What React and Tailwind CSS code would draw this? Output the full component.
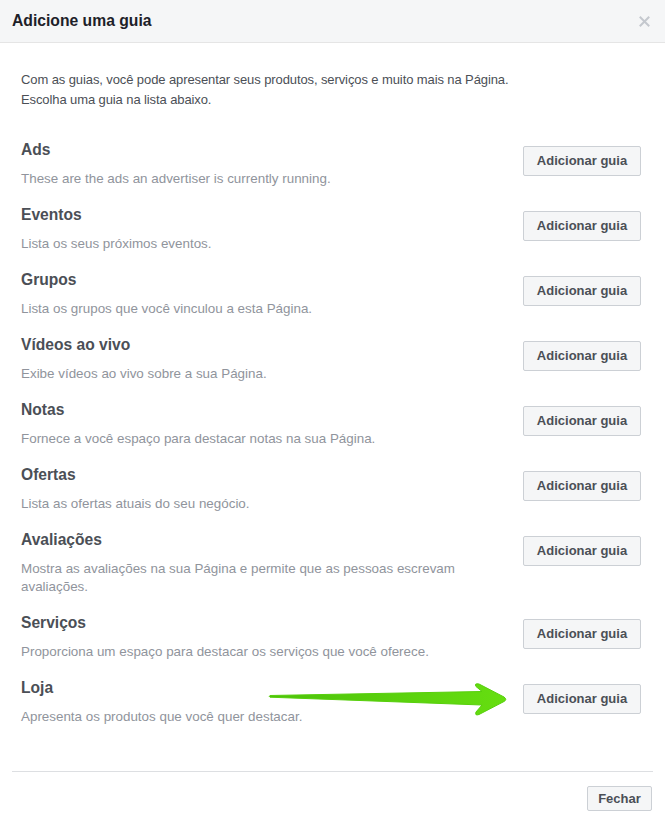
import React from 'react';

const tabs = [
    { name: 'Ads', description: 'These are the ads an advertiser is currently running.' },
    { name: 'Eventos', description: 'Lista os seus próximos eventos.' },
    { name: 'Grupos', description: 'Lista os grupos que você vinculou a esta Página.' },
    { name: 'Vídeos ao vivo', description: 'Exibe vídeos ao vivo sobre a sua Página.' },
    { name: 'Notas', description: 'Fornece a você espaço para destacar notas na sua Página.' },
    { name: 'Ofertas', description: 'Lista as ofertas atuais do seu negócio.' },
    { name: 'Avaliações', description: 'Mostra as avaliações na sua Página e permite que as pessoas escrevam avaliações.' },
    { name: 'Serviços', description: 'Proporciona um espaço para destacar os serviços que você oferece.' },
    { name: 'Loja', description: 'Apresenta os produtos que você quer destacar.' },
];

const GreenArrow = () => (
    <svg
        className="absolute left-[265px] top-[680px] pointer-events-none"
        width="250"
        height="40"
        viewBox="0 0 250 40"
    >
        <defs>
            <linearGradient id="arrowFill" x1="0" y1="0" x2="1" y2="0">
                <stop offset="0" stopColor="#4cc20a" />
                <stop offset="1" stopColor="#66de10" />
            </linearGradient>
        </defs>
        <path
            d="M5 15.5 L217 11.5 L211 6.5 Q209 3 214 4 L239 17 Q242.5 19.5 239 21.5 L214 34.5 Q209.5 36 211 32 L217 25 L5 17.2 Q3.5 16.3 5 15.5 Z"
            fill="url(#arrowFill)"
            stroke="#57cf0c"
            strokeWidth="1"
            strokeLinejoin="round"
        />
    </svg>
);

const App = () => {
    return (
        <div className="relative w-[665px] h-[825px] bg-white font-['Liberation_Sans',Arial,sans-serif]">
            <div className="h-[43px] bg-[#f5f6f7] border-b border-[#e5e5e5] flex items-center justify-between pl-[12px] pr-[15px]">
                <h1 className="text-[15.7px] font-bold text-[#1d2129]">Adicione uma guia</h1>
                <svg width="11" height="11" viewBox="0 0 11 11" className="mt-[1px]">
                    <path d="M1.5 1.5 L9.5 9.5 M9.5 1.5 L1.5 9.5" stroke="#c4c8ce" strokeWidth="2" strokeLinecap="square" />
                </svg>
            </div>

            <div className="pl-[21px] pr-[24px]">
                <p className="pt-[27px] text-[13px] leading-[20px] tracking-[-0.1px] text-[#4b4f56]">
                    Com as guias, você pode apresentar seus produtos, serviços e muito mais na Página.
                    <br />
                    Escolha uma guia na lista abaixo.
                </p>

                <div className="mt-[30px] flex flex-col gap-[17px]">
                    {tabs.map((tab) => (
                        <div key={tab.name} className="flex items-start justify-between">
                            <div className="flex-1 pr-[22px]">
                                <div className="text-[15.6px] leading-[20px] font-bold text-[#4b4f56]">{tab.name}</div>
                                <div className="mt-[10px] text-[13.4px] leading-[18px] text-[#90949c]">{tab.description}</div>
                            </div>
                            <button className="mt-[6px] h-[30px] w-[118px] shrink-0 rounded-[2px] border border-[#ccd0d5] bg-[#f5f6f7] text-[13px] font-bold text-[#4b4f56]">
                                Adicionar guia
                            </button>
                        </div>
                    ))}
                </div>
            </div>

            <div className="mx-[12px] mt-[45px] border-t border-[#dddfe2] pt-[14px] pb-[14px] flex justify-end pr-[1px]">
                <button className="h-[25px] w-[65px] rounded-[2px] border border-[#ccd0d5] bg-[#f5f6f7] text-[13px] font-bold text-[#4b4f56]">
                    Fechar
                </button>
            </div>

            <GreenArrow />
        </div>
    );
};

export default App;
